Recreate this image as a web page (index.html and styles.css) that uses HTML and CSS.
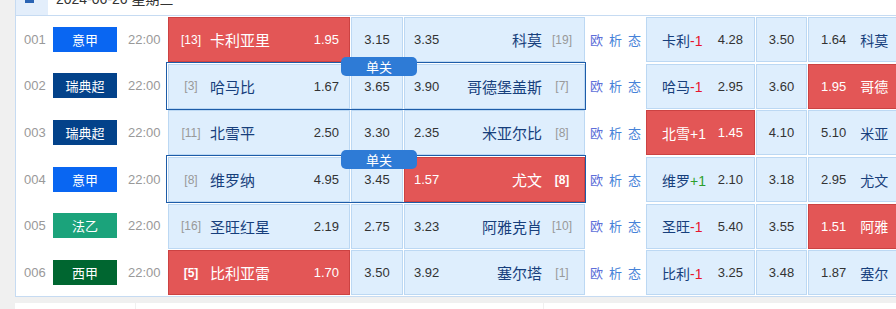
FILE: index.html
```html
<!DOCTYPE html>
<html lang="zh-CN">
<head>
<meta charset="utf-8">
<title>竞彩足球</title>
<link rel="stylesheet" href="styles.css">
</head>
<body>
<div class="wrap">
  <div class="panel">
    <div class="head">
      <div class="head-ic"><span class="ic"></span></div>
      <span class="date">2024-06-26 星期三</span>
    </div>

    <div class="row">
      <span class="no">001</span>
      <span class="lg lg-a">意甲</span>
      <span class="tm">22:00</span>
      <div class="grp">
        <div class="c home hot"><span class="rk">[13]</span><span class="nm">卡利亚里</span><span class="od">1.95</span></div>
        <div class="c draw">3.15</div>
        <div class="c away"><span class="od">3.35</span><span class="nm">科莫</span><span class="rk">[19]</span></div>
      </div>
      <div class="links"><a class="l1">欧</a><a>析</a><a>态</a></div>
      <div class="grp hgrp">
        <div class="c h1"><span class="nm">卡利<span class="neg">-1</span></span><span class="od">4.28</span></div>
        <div class="c h2">3.50</div>
        <div class="c h3"><span class="od">1.64</span><span class="nm">科莫</span></div>
      </div>
    </div>

    <div class="row">
      <span class="no">002</span>
      <span class="lg lg-s">瑞典超</span>
      <span class="tm">22:00</span>
      <div class="grp single">
        <span class="tag">单关</span>
        <div class="c home"><span class="rk">[3]</span><span class="nm">哈马比</span><span class="od">1.67</span></div>
        <div class="c draw">3.65</div>
        <div class="c away"><span class="od">3.90</span><span class="nm">哥德堡盖斯</span><span class="rk">[7]</span></div>
      </div>
      <div class="links"><a class="l1">欧</a><a>析</a><a>态</a></div>
      <div class="grp hgrp">
        <div class="c h1"><span class="nm">哈马<span class="neg">-1</span></span><span class="od">2.95</span></div>
        <div class="c h2">3.60</div>
        <div class="c h3 hot"><span class="od">1.95</span><span class="nm">哥德</span></div>
      </div>
    </div>

    <div class="row">
      <span class="no">003</span>
      <span class="lg lg-s">瑞典超</span>
      <span class="tm">22:00</span>
      <div class="grp">
        <div class="c home"><span class="rk">[11]</span><span class="nm">北雪平</span><span class="od">2.50</span></div>
        <div class="c draw">3.30</div>
        <div class="c away"><span class="od">2.35</span><span class="nm">米亚尔比</span><span class="rk">[8]</span></div>
      </div>
      <div class="links"><a class="l1">欧</a><a>析</a><a>态</a></div>
      <div class="grp hgrp">
        <div class="c h1 hot"><span class="nm">北雪<span class="pos">+1</span></span><span class="od">1.45</span></div>
        <div class="c h2">4.10</div>
        <div class="c h3"><span class="od">5.10</span><span class="nm">米亚</span></div>
      </div>
    </div>

    <div class="row">
      <span class="no">004</span>
      <span class="lg lg-a">意甲</span>
      <span class="tm">22:00</span>
      <div class="grp single">
        <span class="tag">单关</span>
        <div class="c home"><span class="rk">[8]</span><span class="nm">维罗纳</span><span class="od">4.95</span></div>
        <div class="c draw">3.45</div>
        <div class="c away hot"><span class="od">1.57</span><span class="nm">尤文</span><span class="rk b">[8]</span></div>
      </div>
      <div class="links"><a class="l1">欧</a><a>析</a><a>态</a></div>
      <div class="grp hgrp">
        <div class="c h1"><span class="nm">维罗<span class="pos">+1</span></span><span class="od">2.10</span></div>
        <div class="c h2">3.18</div>
        <div class="c h3"><span class="od">2.95</span><span class="nm">尤文</span></div>
      </div>
    </div>

    <div class="row">
      <span class="no">005</span>
      <span class="lg lg-f">法乙</span>
      <span class="tm">22:00</span>
      <div class="grp">
        <div class="c home"><span class="rk">[16]</span><span class="nm">圣旺红星</span><span class="od">2.19</span></div>
        <div class="c draw">2.75</div>
        <div class="c away"><span class="od">3.23</span><span class="nm">阿雅克肖</span><span class="rk">[10]</span></div>
      </div>
      <div class="links"><a class="l1">欧</a><a>析</a><a>态</a></div>
      <div class="grp hgrp">
        <div class="c h1"><span class="nm">圣旺<span class="neg">-1</span></span><span class="od">5.40</span></div>
        <div class="c h2">3.55</div>
        <div class="c h3 hot"><span class="od">1.51</span><span class="nm">阿雅</span></div>
      </div>
    </div>

    <div class="row">
      <span class="no">006</span>
      <span class="lg lg-x">西甲</span>
      <span class="tm">22:00</span>
      <div class="grp">
        <div class="c home hot"><span class="rk b">[5]</span><span class="nm">比利亚雷</span><span class="od">1.70</span></div>
        <div class="c draw">3.50</div>
        <div class="c away"><span class="od">3.92</span><span class="nm">塞尔塔</span><span class="rk">[1]</span></div>
      </div>
      <div class="links"><a class="l1">欧</a><a>析</a><a>态</a></div>
      <div class="grp hgrp">
        <div class="c h1"><span class="nm">比利<span class="neg">-1</span></span><span class="od">3.25</span></div>
        <div class="c h2">3.48</div>
        <div class="c h3"><span class="od">1.87</span><span class="nm">塞尔</span></div>
      </div>
    </div>
  </div>
  <div class="foot">
    <div class="fb fb1"></div>
    <div class="fb fb2"></div>
    <div class="fb fb3"></div>
  </div>
</div>
</body>
</html>
```
FILE: styles.css
```css
html, body {
  margin: 0;
  padding: 0;
}
body {
  background: #f0f0f0;
  font-family: "Liberation Sans", "Noto Sans CJK SC", sans-serif;
  overflow: hidden;
  width: 896px;
  height: 309px;
}
.wrap {
  margin: -20px 0 0 15px;
  width: 1000px;
}
.panel {
  background: #fff;
  border-left: 1px solid #c6dbf2;
  border-bottom: 1px solid #c6dbf2;
}
.head {
  height: 35px;
  border-bottom: 1px solid #c6dbf2;
  display: flex;
  align-items: center;
}
.head-ic {
  width: 32px;
  align-self: stretch;
  background: #e3eefb;
  display: flex;
  align-items: flex-end;
  box-sizing: border-box;
  padding: 0 0 12px 9px;
}
.ic {
  width: 9px;
  height: 10px;
  background: #2a64b4;
}
.date {
  margin-left: 8px;
  font-size: 14px;
  color: #333;
}
.row {
  display: flex;
  align-items: center;
  height: 46.6px;
}
.no {
  width: 37px;
  box-sizing: border-box;
  padding-left: 8px;
  font-size: 13px;
  color: #999;
}
.lg {
  width: 64px;
  height: 25px;
  line-height: 25px;
  text-align: center;
  color: #fff;
  font-size: 13px;
  font-family: "Noto Sans CJK SC", sans-serif;
}
.lg-a { background: #0966f2; }
.lg-s { background: #03428a; }
.lg-f { background: #1ba37b; }
.lg-x { background: #006630; }
.tm {
  width: 49px;
  box-sizing: border-box;
  padding-left: 11px;
  font-size: 13px;
  color: #999;
}
.grp {
  position: relative;
  box-sizing: border-box;
  height: 48px;
  border: 1px solid transparent;
  padding: 1px 0 0 1px;
  display: flex;
  gap: 1px;
  align-items: flex-start;
}
.grp.single {
  border-color: #1d5ca8;
}
.tag {
  position: absolute;
  left: 174px;
  top: -6px;
  width: 76px;
  height: 19px;
  line-height: 19px;
  border-radius: 5px;
  background: #2e7bd6;
  color: #fff;
  font-size: 13px;
  text-align: center;
  font-family: "Noto Sans CJK SC", sans-serif;
  z-index: 2;
}
.c {
  box-sizing: border-box;
  height: 45px;
  border: 1px solid #bcd8f3;
  background: #deeefd;
  display: flex;
  align-items: center;
  color: #333;
  font-size: 13px;
}
.c.hot {
  background: #e35656;
  border-color: #cc4242;
  color: #fff;
}
.nm {
  font-family: "Noto Sans CJK SC", sans-serif;
  color: #173f7c;
  font-size: 15px;
}
.hot .nm {
  color: #fff;
}
.rk {
  width: 30px;
  text-align: center;
  font-size: 12px;
  color: #999;
}
.hot .rk {
  color: #fff;
}
.rk.b {
  font-weight: bold;
}
.home {
  width: 182px;
  padding: 0 10px 0 7px;
}
.home .rk {
  margin-right: 4px;
}
.home .od {
  margin-left: auto;
}
.draw {
  width: 52px;
  justify-content: center;
}
.away {
  width: 181px;
  padding: 0 7px 0 9px;
}
.away .nm {
  margin-left: auto;
  margin-right: 5px;
}
.links {
  width: 58px;
  box-sizing: border-box;
  padding-left: 4px;
  display: flex;
  gap: 6px;
  font-size: 13px;
  font-family: "Noto Sans CJK SC", sans-serif;
}
.links a {
  color: #4682d8;
  cursor: pointer;
}
.links a.l1 {
  color: #5e6fd9;
}
.hgrp .nm {
  font-size: 14px;
}
.h1 {
  width: 109px;
  padding: 0 11px 0 15px;
  justify-content: space-between;
}
.h2 {
  width: 51px;
  justify-content: center;
}
.h3 {
  width: 130px;
  padding-left: 12px;
  gap: 14px;
}
.neg {
  color: #e8162e;
  font-family: "Liberation Sans", sans-serif;
  font-size: 14px;
}
.pos {
  color: #2d9e2d;
  font-family: "Liberation Sans", sans-serif;
  font-size: 14px;
}
.hot .pos, .hot .neg {
  color: #fff;
}
.foot {
  display: flex;
  gap: 1px;
  margin-top: 6px;
  height: 20px;
}
.fb {
  background: #fff;
}
.fb1 { width: 120px; }
.fb2 { width: 407px; }
.fb3 { width: 400px; }
```
